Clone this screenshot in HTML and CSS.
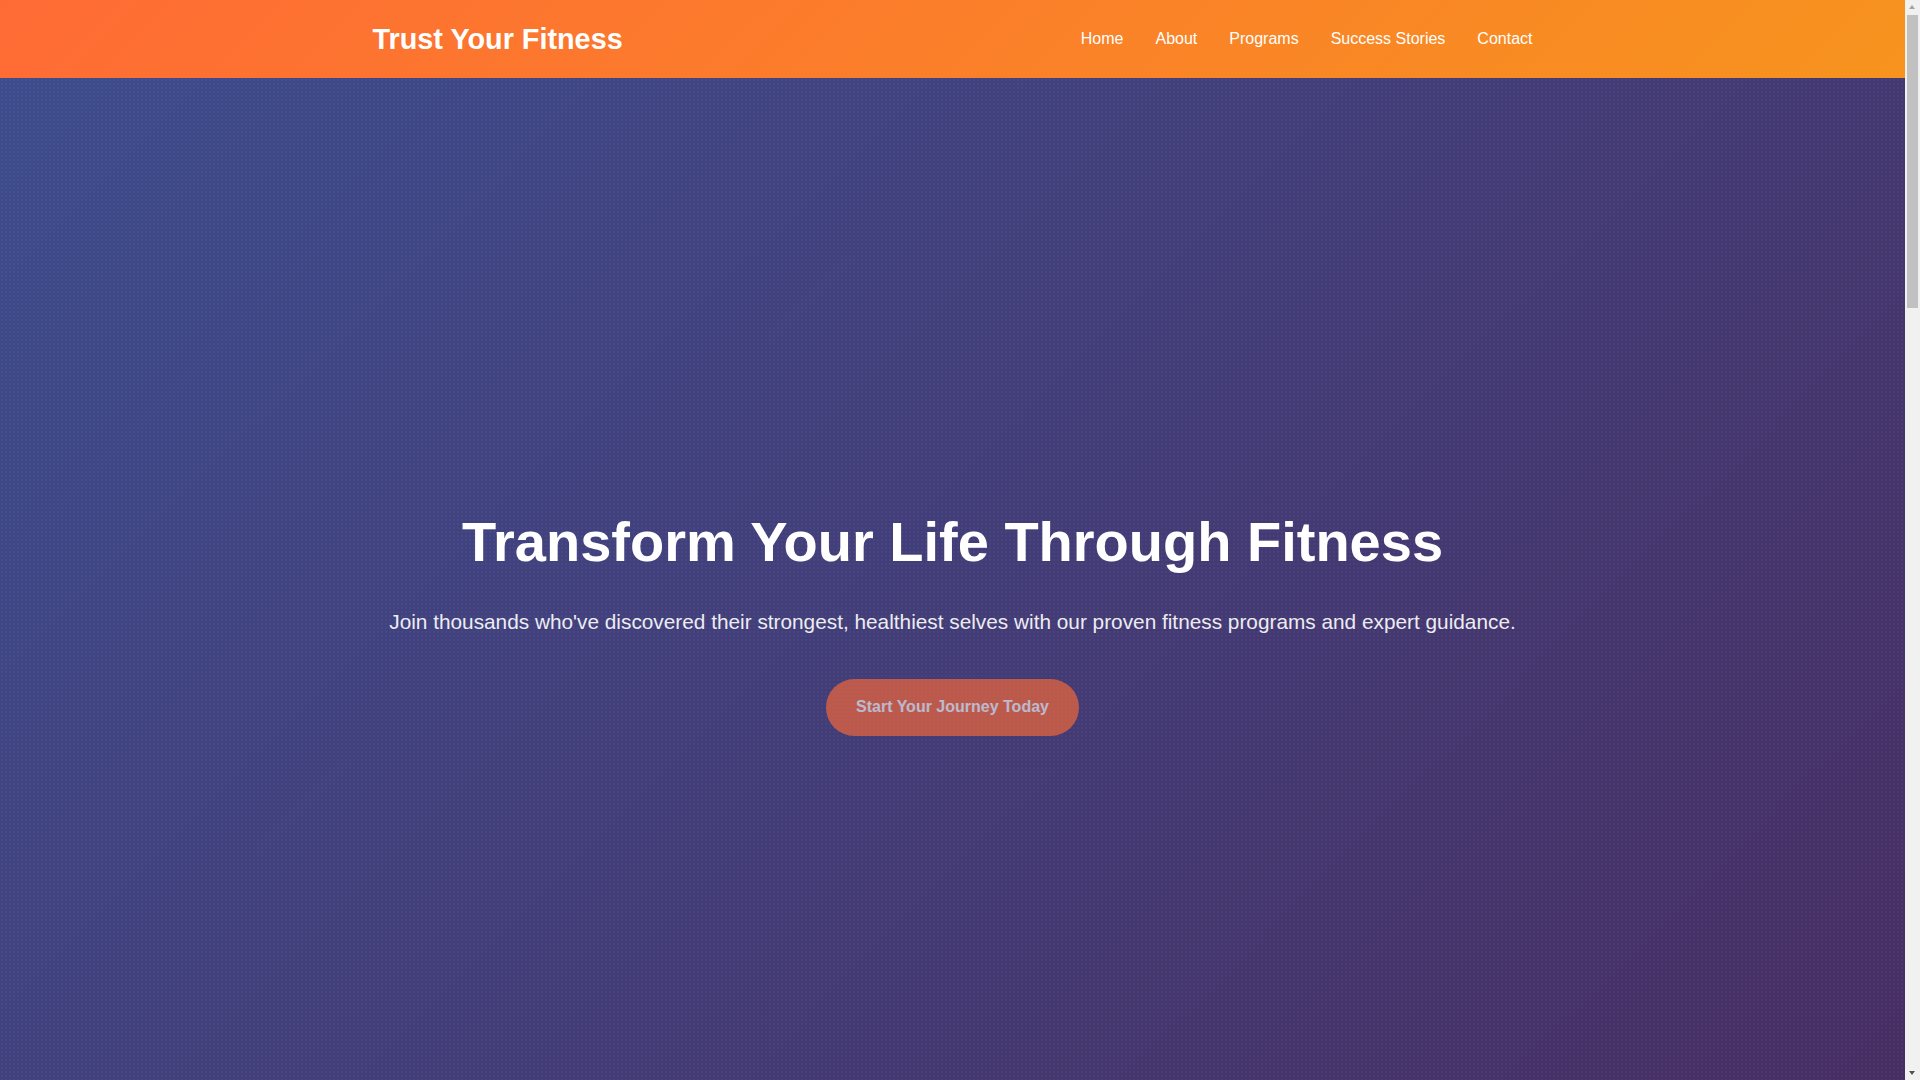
FILE: index.html
```html
<!DOCTYPE html>
<html lang="en">
<head>
<meta charset="utf-8">
<title>Trust Your Fitness</title>
<link rel="stylesheet" href="styles.css">
</head>
<body>
<div class="page">
  <header class="site-header">
    <div class="container header-inner">
      <a class="logo" href="#">Trust Your Fitness</a>
      <nav class="nav">
        <a href="#">Home</a>
        <a href="#">About</a>
        <a href="#">Programs</a>
        <a href="#">Success Stories</a>
        <a href="#">Contact</a>
      </nav>
    </div>
  </header>
  <main>
    <section class="hero">
      <div class="hero-content">
        <h1 class="hero-title">Transform Your Life Through Fitness</h1>
        <p class="hero-sub">Join thousands who've discovered their strongest, healthiest selves with our proven fitness programs and expert guidance.</p>
        <a class="cta" href="#">Start Your Journey Today</a>
      </div>
    </section>
  </main>
</div>
<div class="scrollbar" aria-hidden="true">
  <span class="sb-arrow sb-up"></span>
  <span class="sb-thumb"></span>
  <span class="sb-arrow sb-down"></span>
</div>
</body>
</html>
```
FILE: styles.css
```css
* { box-sizing: border-box; }
html, body { margin: 0; padding: 0; height: 100%; overflow: hidden; }
body {
  font-family: "Liberation Sans", Arial, sans-serif;
  color: #333;
  line-height: 1.6;
}
a { text-decoration: none; }
.page {
  width: calc(100% - 15px);
}
.container {
  max-width: 1200px;
  margin: 0 auto;
  padding: 0 20px;
}
.site-header {
  background: linear-gradient(135deg, #ff6b35 0%, #f7931e 100%);
  height: 78px;
}
.header-inner {
  height: 100%;
  display: flex;
  align-items: center;
  justify-content: space-between;
}
.logo {
  color: #fff;
  font-weight: bold;
  font-size: 1.8rem;
  line-height: 1.2;
}
.nav { display: flex; gap: 32px; }
.nav a {
  color: #fff;
  font-size: 16px;
}
.hero {
  min-height: 100vh;
  padding-top: 8px;
  display: flex;
  align-items: center;
  justify-content: center;
  text-align: center;
  color: #fff;
  background:
    radial-gradient(rgba(255,255,255,0.035) 1px, transparent 1.2px) 0 0 / 4px 4px,
    linear-gradient(rgba(0,0,0,0.4), rgba(0,0,0,0.4)),
    linear-gradient(135deg, #667eea 0%, #764ba2 100%);
}
.hero-content { padding: 0 20px; }
.hero-title {
  margin: 0 0 30px;
  font-size: 3.5rem;
  line-height: 1.2;
  font-weight: bold;
}
.hero-sub {
  margin: 0 0 40px;
  font-size: 1.3rem;
  line-height: 1.6;
  opacity: 0.9;
}
.cta {
  display: inline-block;
  background: #ff6b35;
  color: #fff;
  font-weight: bold;
  font-size: 16px;
  line-height: 18px;
  padding: 19.5px 30px;
  border-radius: 50px;
  opacity: 0.64;
}

/* simulated browser scrollbar */
.scrollbar {
  position: fixed;
  top: 0;
  right: 0;
  width: 15px;
  height: 100vh;
  background: #f1f1f1;
}
.sb-thumb {
  position: absolute;
  left: 2px;
  right: 2px;
  top: 15px;
  height: 293px;
  background: #c1c1c1;
}
.sb-arrow {
  position: absolute;
  left: 4px;
  width: 0;
  height: 0;
  border-left: 3.5px solid transparent;
  border-right: 3.5px solid transparent;
}
.sb-up {
  top: 5px;
  border-bottom: 4px solid #a3a3a3;
}
.sb-down {
  bottom: 5px;
  border-top: 4px solid #505050;
}
```
